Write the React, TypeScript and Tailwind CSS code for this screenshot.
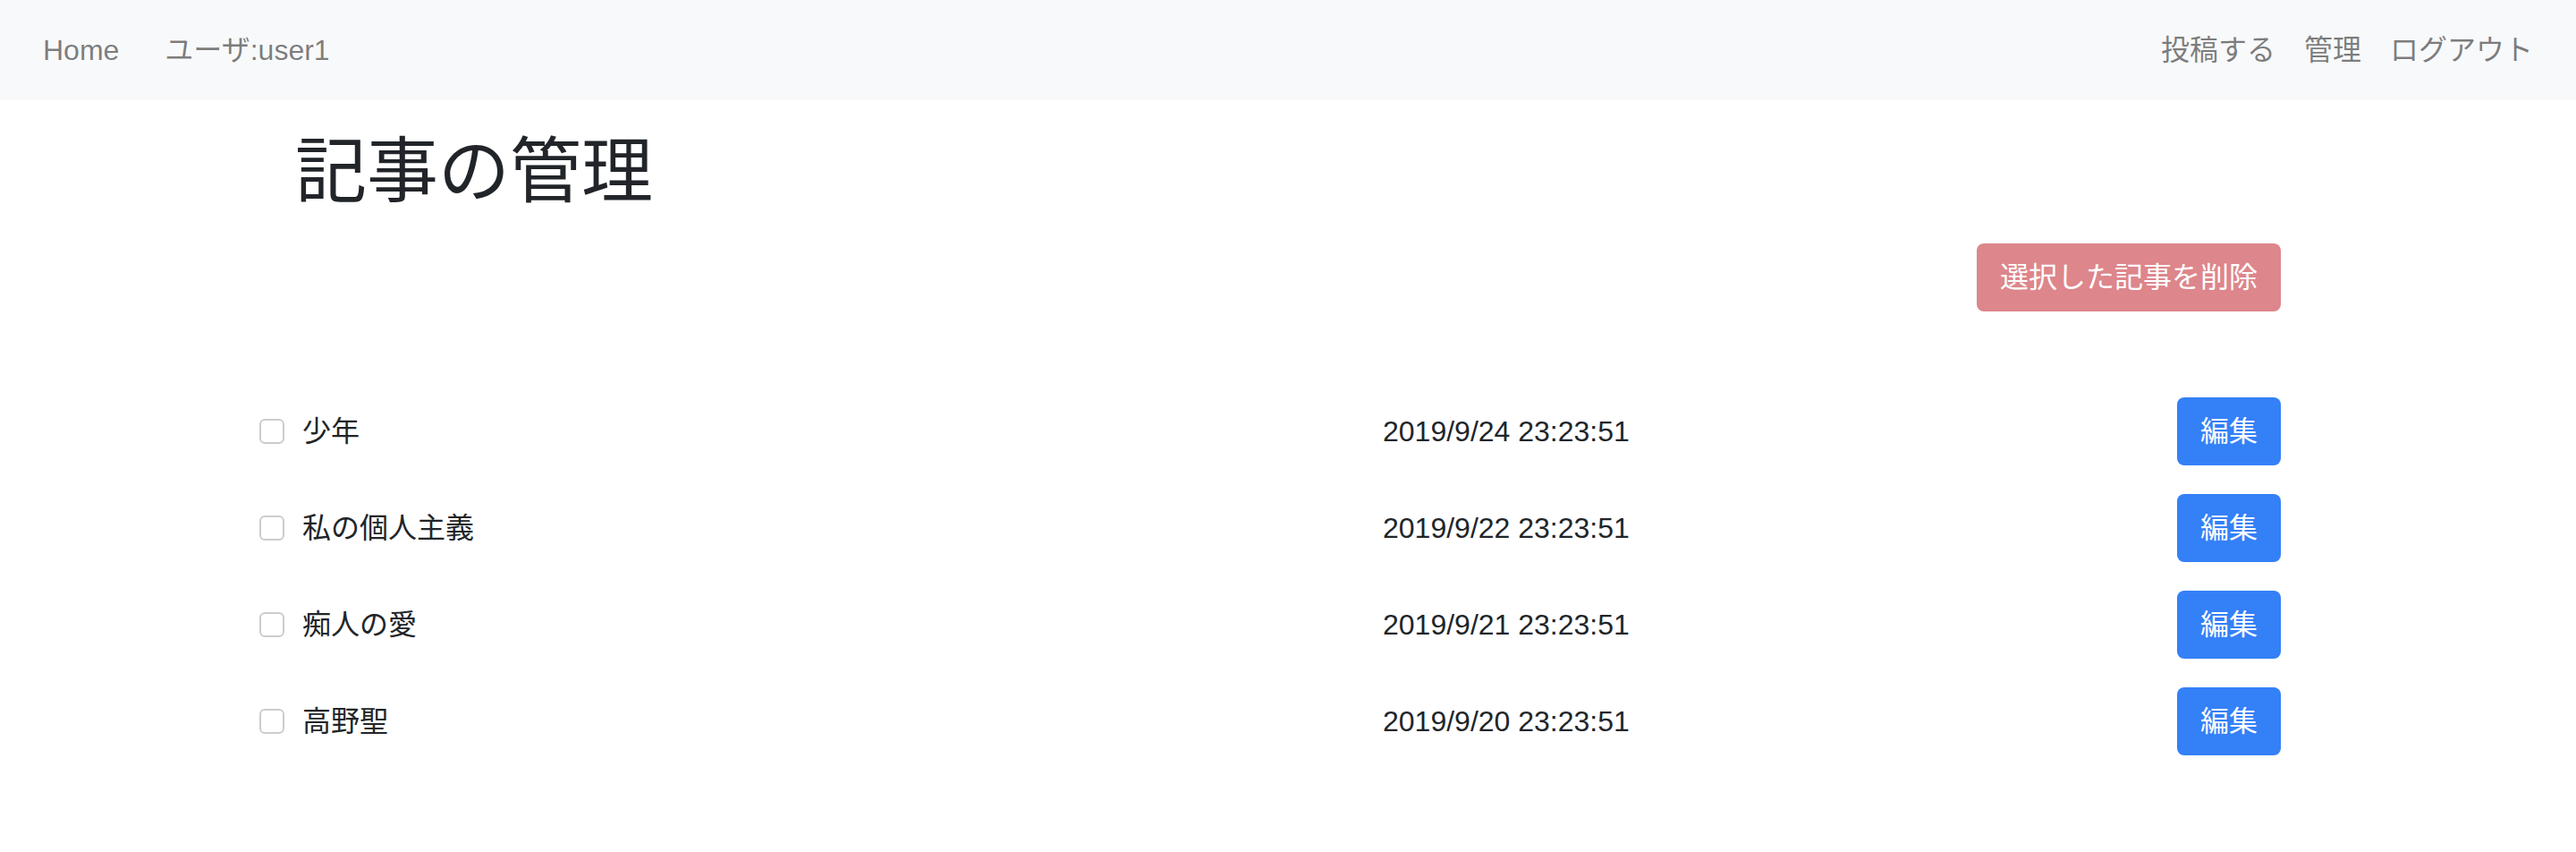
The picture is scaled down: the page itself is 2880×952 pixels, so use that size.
const posts = [
  { title: '少年', date: '2019/9/24 23:23:51' },
  { title: '私の個人主義', date: '2019/9/22 23:23:51' },
  { title: '痴人の愛', date: '2019/9/21 23:23:51' },
  { title: '高野聖', date: '2019/9/20 23:23:51' },
]

const font = 'font-["Liberation_Sans","Noto_Sans_CJK_JP",sans-serif]'

export default function App() {
  return (
    <div className={`min-h-screen bg-white text-[#212529] ${font}`}>
      {/* ナビバー */}
      <nav className="h-[112px] bg-[#f8f9fa] flex items-center justify-between px-[48px] text-[32px] leading-[48px] text-black/50">
        <div className="flex items-center">
          <a href="#">Home</a>
          <span className="ml-[51px]">ユーザ:user1</span>
        </div>
        <div className="flex items-center gap-[32px]">
          <a href="#">投稿する</a>
          <a href="#">管理</a>
          <a href="#">ログアウト</a>
        </div>
      </nav>

      <main className="w-[2220px] mx-auto pt-[32px]">
        <h1 className="text-[80px] leading-[96px] font-normal">記事の管理</h1>

        <div className="flex justify-end mt-[32px]">
          <button
            disabled
            className="h-[76px] px-[26px] rounded-[8px] bg-[#dd868b] text-white text-[32px] leading-[48px]"
          >
            選択した記事を削除
          </button>
        </div>

        {/* 記事一覧 */}
        <ul className="mt-[96px] -ml-[40px] flex flex-col gap-[32px]">
          {posts.map((p) => (
            <li key={p.title} className="flex items-center h-[76px] text-[32px] leading-[48px]">
              <div className="w-[1256px] flex items-center gap-[20px]">
                <input
                  type="checkbox"
                  className="appearance-none w-[28px] h-[28px] rounded-[6px] border-2 border-[#cccccc] bg-white"
                />
                <span>{p.title}</span>
              </div>
              <span className="flex-1">{p.date}</span>
              <button className="h-[76px] w-[116px] rounded-[8px] bg-[#3480f7] text-white text-[32px] leading-[48px]">
                編集
              </button>
            </li>
          ))}
        </ul>
      </main>
    </div>
  )
}
